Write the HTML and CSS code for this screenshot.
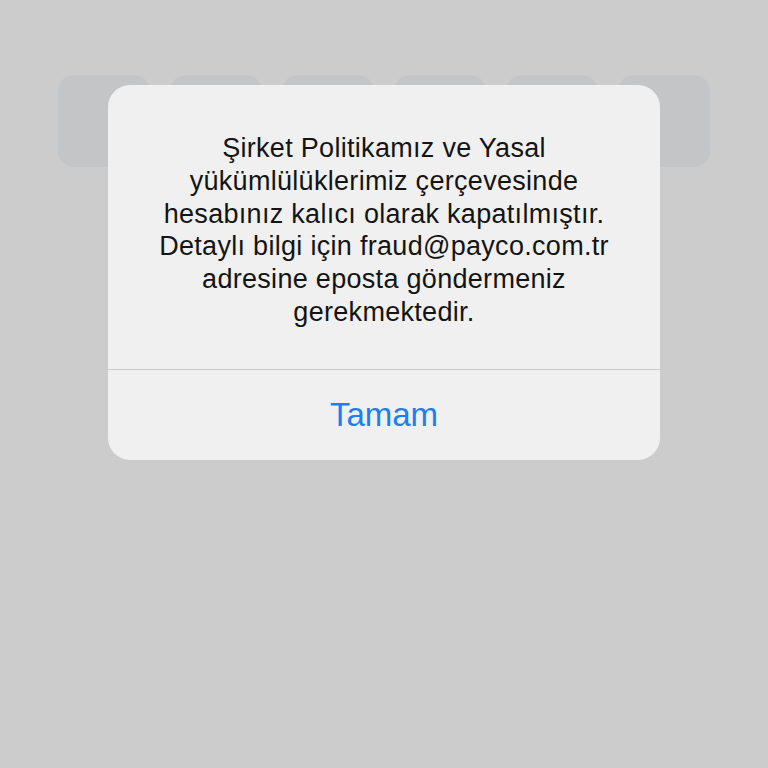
FILE: index.html
```html
<!DOCTYPE html>
<html>
<head>
  <meta charset="UTF-8">
  <meta name="viewport" content="width=device-width, initial-scale=1.0">
  <title>Uyarı</title>
  <link rel="stylesheet" href="styles.css">
</head>
<body>
  <div class="screen">
    <div class="pin-row">
      <div class="pin-box"></div>
      <div class="pin-box"></div>
      <div class="pin-box"></div>
      <div class="pin-box"></div>
      <div class="pin-box"></div>
      <div class="pin-box"></div>
    </div>

    <div class="alert">
      <p class="alert-message">Şirket Politikamız ve Yasal<br>yükümlülüklerimiz çerçevesinde<br>hesabınız kalıcı olarak kapatılmıştır.<br>Detaylı bilgi için fraud@payco.com.tr<br>adresine eposta göndermeniz<br>gerekmektedir.</p>
      <button class="alert-button">Tamam</button>
    </div>
  </div>
</body>
</html>
```

FILE: styles.css
```css
/* alert over the pin entry screen */
html, body {
  margin: 0;
  padding: 0;
}

body {
  background-color: #cccccc;
  font-family: "Liberation Sans", Arial, sans-serif;
}

.screen {
  position: relative;
  width: 768px;
  height: 768px;
}

.pin-row {
  display: flex;
  gap: 20px;
  padding: 75px 0 0 58px;
}

.pin-box {
  width: 92px;
  height: 92px;
  background-color: #c4c5c7;
  border-radius: 16px;
}

.alert {
  position: absolute;
  left: 108px;
  top: 85px;
  width: 552px;
  height: 375px;
  background-color: #f0f0f0;
  border-radius: 22px;
  display: flex;
  flex-direction: column;
}

.alert-message {
  margin: 0;
  padding: 47px 20px 0;
  height: 237px;
  font-size: 27px;
  letter-spacing: 0.3px;
  line-height: 32.8px;
  text-align: center;
  color: #141414;
  border-bottom: 1px solid #c8c8c8;
}

.alert-button {
  flex: 1;
  border: none;
  background: none;
  font-family: "Liberation Sans", Arial, sans-serif;
  font-size: 33px;
  color: #1a7ff5;
  cursor: pointer;
  padding: 0;
}
```
